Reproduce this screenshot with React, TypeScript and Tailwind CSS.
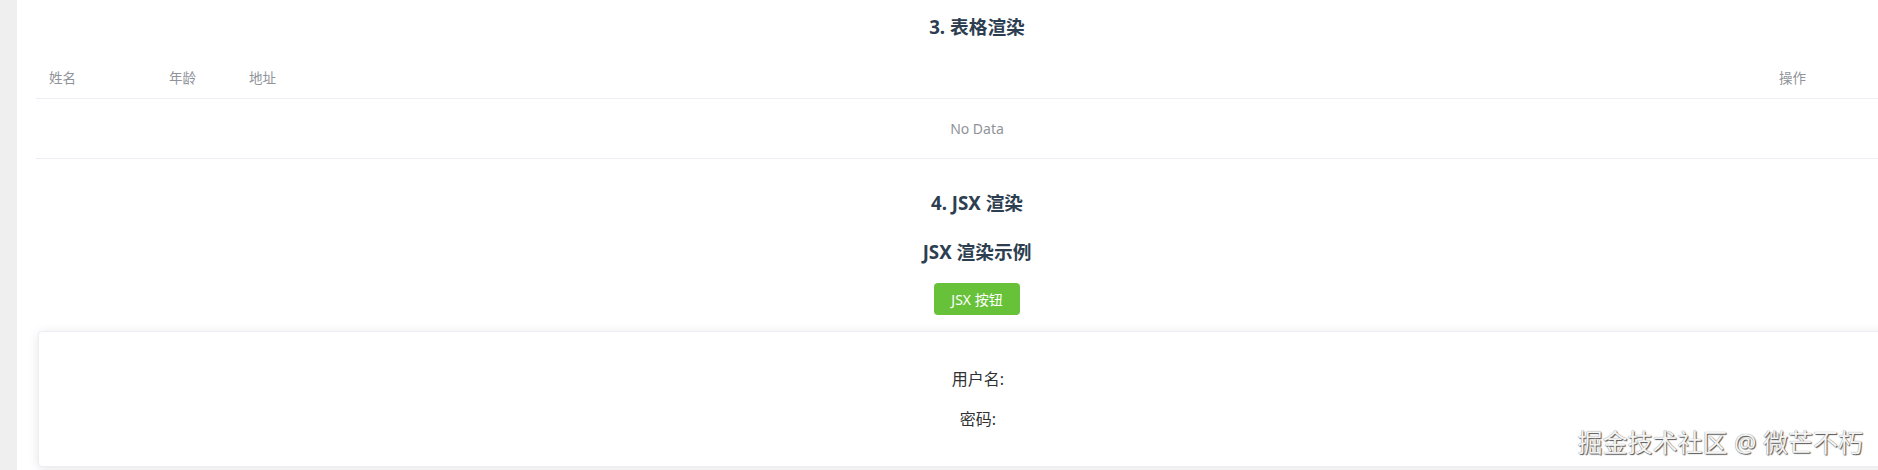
export default function App() {
  return (
    <div className="relative flex h-[470px] w-[1878px] overflow-hidden bg-[#f0f0f0] font-['Noto_Sans','Noto_Sans_CJK_SC',sans-serif]">
      {/* left gray strip */}
      <div className="w-[17px] shrink-0 bg-[#efefef]" />

      {/* page */}
      <div className="flex-1 bg-white pl-[19px]">
        <div className="w-[1882px]">
          {/* 3. table */}
          <h3 className="flex h-[54px] items-center justify-center text-[18.72px] font-bold text-[#2c3e50]">
            3. 表格渲染
          </h3>
          <div className="grid h-[45px] grid-cols-[120px_80px_1fr_152px] items-center border-b border-[#ebeef5] pt-[4px] text-[13.5px] text-[#909399]">
            <div className="pl-[13px]">姓名</div>
            <div className="pl-[13px]">年龄</div>
            <div className="pl-[13px]">地址</div>
            <div className="pl-[13px]">操作</div>
          </div>
          <div className="flex h-[60px] items-center justify-center border-b border-[#ebeef5] text-[14px] text-[#909399]">
            No Data
          </div>

          {/* 4. JSX */}
          <h3 className="mt-[32px] flex h-[24px] items-center justify-center text-[18.72px] font-bold text-[#2c3e50]">
            4. JSX 渲染
          </h3>
          <h3 className="mt-[25px] flex h-[24px] items-center justify-center text-[18.72px] font-bold text-[#2c3e50]">
            JSX 渲染示例
          </h3>
          <div className="mt-[19px] flex justify-center">
            <button className="h-[32px] w-[86px] rounded-[4px] bg-[#67c23a] text-[14px] text-white">
              JSX 按钮
            </button>
          </div>

          {/* form card */}
          <div className="ml-[2px] mt-[16px] flex h-[136px] flex-col items-center rounded-[4px] border border-[#ebeef5] bg-white pt-[35px] text-[16px] text-[#303133] shadow-[0_2px_12px_0_rgba(0,0,0,0.1)]">
            <div className="leading-[24px]">用户名:</div>
            <div className="mt-[16px] leading-[24px]">密码:</div>
          </div>
        </div>
      </div>

      {/* watermark */}
      <div className="absolute right-[15px] top-[427px] text-[25px] leading-[30px] text-[#f4f4f4] [text-shadow:1px_1px_1px_#555,0_0_1px_#777]">
        掘金技术社区 @ 微芒不朽
      </div>
    </div>
  );
}
